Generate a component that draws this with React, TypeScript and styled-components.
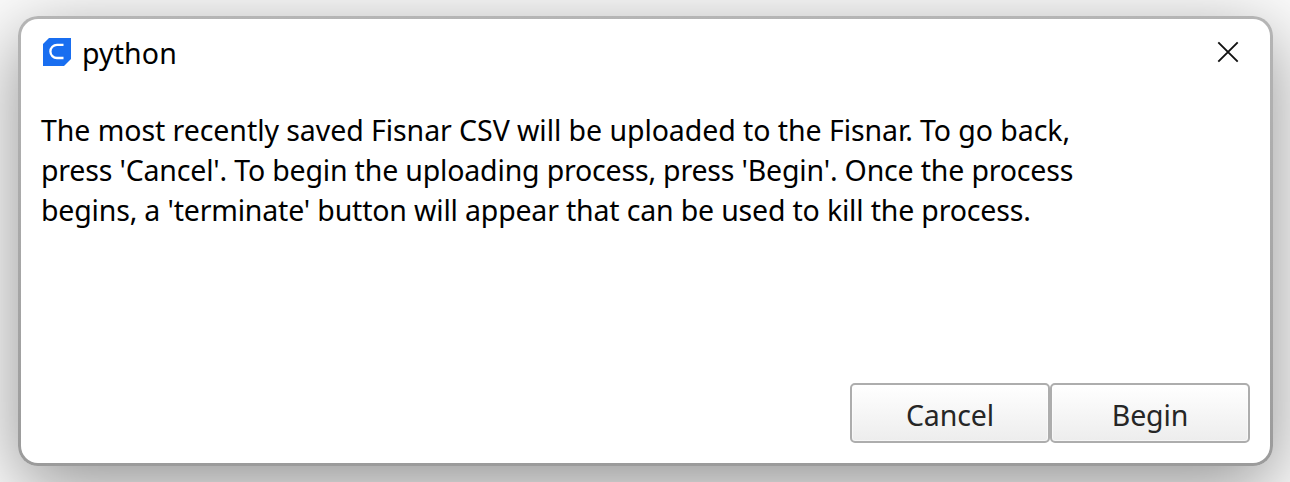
import React from "react";
import styled, { createGlobalStyle } from "styled-components";

const GlobalStyle = createGlobalStyle`
  * { box-sizing: border-box; }
  body {
    margin: 0;
    background: #fbfbfb;
    font-family: "Noto Sans", "Open Sans", sans-serif;
    color: #000;
    overflow: hidden;
  }
`;

const Desktop = styled.main`
  height: 482px;
  padding: 16px 17px 16px 18px;
  overflow: hidden;
`;

const Dialog = styled.section`
  display: flex;
  flex-direction: column;
  height: 450px;
  padding: 0 20px 20px;
  background:
    linear-gradient(#fff, #fff) padding-box,
    linear-gradient(#b5b5b5, #9b9b9b) border-box;
  border: 3px solid transparent;
  border-radius: 20px;
  box-shadow: 0 20px 72px rgba(0, 0, 0, 0.42);
`;

const TitleBar = styled.header`
  display: flex;
  align-items: center;
  height: 66px;
  padding: 0 11px 0 0;
`;

const AppIcon = styled.svg`
  display: block;
  width: 30px;
  height: 30px;
  margin: 0 10px 0 1px;
`;

const Title = styled.h1`
  margin: 2px 0 0;
  font-size: 28.5px;
  line-height: 40px;
  font-weight: 400;
  letter-spacing: 0.1px;
`;

const CloseButton = styled.button`
  display: flex;
  margin-left: auto;
  padding: 0;
  border: 0;
  background: none;
`;

const Message = styled.p`
  margin: 25px 0 0;
  font-size: 28.5px;
  line-height: 40px;
`;

const Line = styled.span<{ $spacing: number }>`
  display: block;
  width: max-content;
  letter-spacing: ${(p) => p.$spacing}px;
  white-space: nowrap;
`;

const Actions = styled.footer`
  display: flex;
  justify-content: flex-end;
  margin-top: auto;
`;

const ActionButton = styled.button`
  width: 200px;
  height: 60px;
  padding: 4px 0 0;
  border: 2px solid #adadad;
  border-radius: 5px;
  background: linear-gradient(#fff, #ededed);
  box-shadow: inset 0 0 0 1px rgba(255, 255, 255, 0.5);
  color: #262626;
  font: 400 28.5px/40px "Noto Sans", "Open Sans", sans-serif;
  letter-spacing: -0.1px;
`;

export default function App() {
  return (
    <>
      <GlobalStyle />
      <Desktop>
        <Dialog role="dialog">
          <TitleBar>
            <AppIcon viewBox="0 0 30 30">
              <path d="M7 1H29V22L22 29H1V7Z" fill="#196ef0" />
              <path d="M21.5 7.8H15a6.6 6.6 0 0 0 0 13.2H21.5" fill="none" stroke="#fff" strokeWidth="2.3" />
            </AppIcon>
            <Title>python</Title>
            <CloseButton aria-label="Close">
              <svg width="22" height="22" viewBox="0 0 22 22">
                <path d="M1.3 1.3L20.7 20.7M20.7 1.3L1.3 20.7" stroke="#111" strokeWidth="1.9" />
              </svg>
            </CloseButton>
          </TitleBar>
          <Message>
            <Line $spacing={-0.065}>The most recently saved Fisnar CSV will be uploaded to the Fisnar. To go back,</Line>
            <Line $spacing={-0.18}>press 'Cancel'. To begin the uploading process, press 'Begin'. Once the process</Line>
            <Line $spacing={-0.18}>begins, a 'terminate' button will appear that can be used to kill the process.</Line>
          </Message>
          <Actions>
            <ActionButton>Cancel</ActionButton>
            <ActionButton>Begin</ActionButton>
          </Actions>
        </Dialog>
      </Desktop>
    </>
  );
}
